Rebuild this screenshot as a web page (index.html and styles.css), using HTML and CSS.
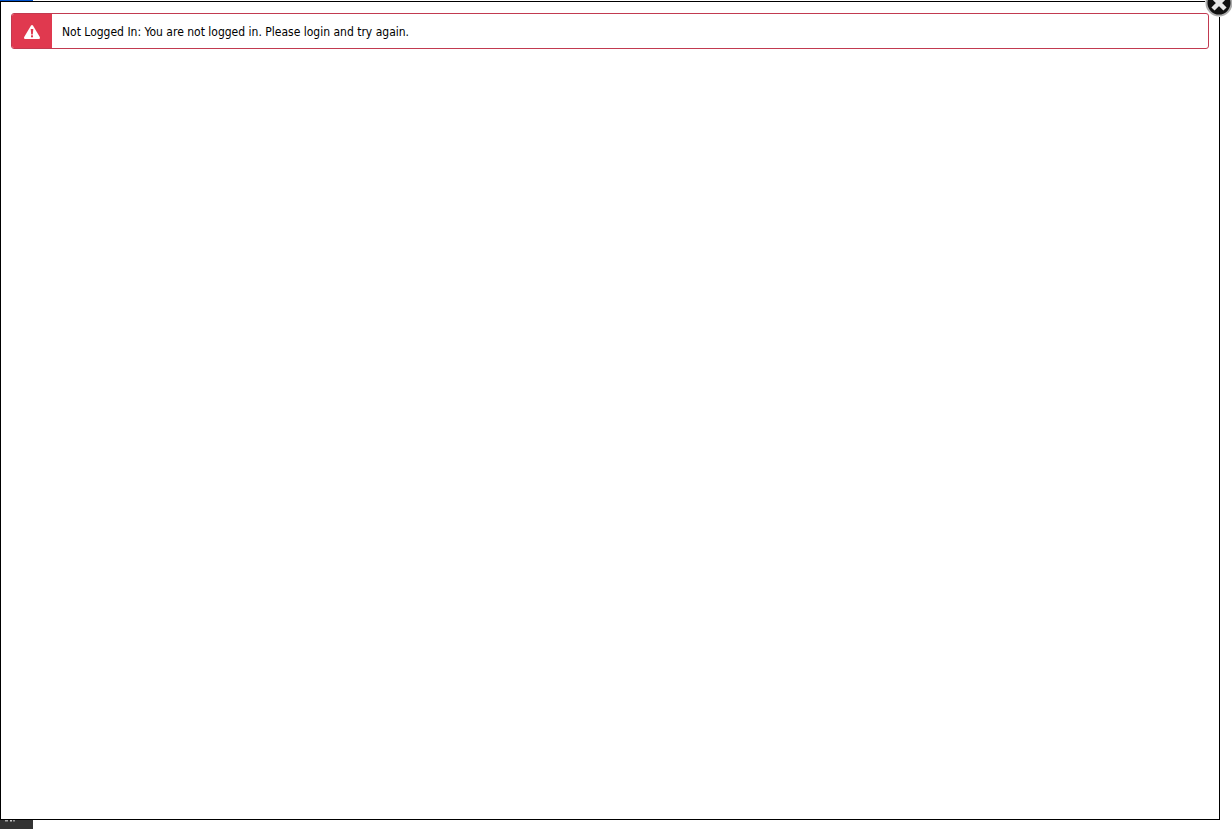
FILE: index.html
```html
<!DOCTYPE html>
<html lang="en">
<head>
  <title>Not Logged In</title>
  <meta charset="UTF-8">
  <link rel="stylesheet" href="styles.css">
</head>
<body>
  <div class="strip strip--top"></div>
  <div class="modal">
    <div class="alert">
      <div class="alert__icon">
        <svg width="16" height="14" viewBox="0 0 16 14">
          <path d="M8 0c.5 0 .8.3 1.100.7l6.700 11.400c.4.800-.1 1.900-1 1.900H1.200c-.9 0-1.400-1.100-1-1.900L6.900.7C7.200.3 7.500 0 8 0z" fill="#fff"/>
          <path d="M6.700 4h2.600l-.5 5.500H7.200z" fill="#e0394f"/>
          <rect x="7" y="10.300" width="2" height="2" fill="#e0394f"/>
        </svg>
      </div>
      <div class="alert__text">Not Logged In: You are not logged in. Please login and try again.</div>
    </div>
    <a class="close" href="#">
      <svg width="28" height="28" viewBox="0 0 28 28">
        <circle cx="14" cy="14" r="14" fill="#fff"/>
        <circle cx="14" cy="14" r="12.500" fill="#111" stroke="#aaa" stroke-width="2"/>
        <path d="M8 8l12 12M20 8L8 20" stroke="#e8e8e8" stroke-width="4.500"/>
      </svg>
    </a>
  </div>
  <div class="strip strip--bottom">
    <svg class="strip__marks" width="33" height="2" viewBox="0 0 33 2">
      <rect x="5" y="0" width="3" height="1.500" fill="#aaa"/>
      <rect x="10" y="0" width="2" height="1.500" fill="#ccc"/>
      <rect x="13" y="0" width="2" height="1.500" fill="#999"/>
    </svg>
  </div>
</body>
</html>
```

FILE: styles.css
```css
html, body {
  margin: 0;
  padding: 0;
  height: 829px;
  overflow: hidden;
  background: #fff;
}

body {
  font-family: "DejaVu Sans Condensed", "DejaVu Sans", sans-serif;
}

.strip {
  width: 33px;
}

.strip--top {
  height: 1px;
  background: #0052cc;
}

.strip--bottom {
  height: 9px;
  background: #333;
}

.strip__marks {
  display: block;
}

.modal {
  position: relative;
  box-sizing: border-box;
  width: 1220px;
  height: 819px;
  padding: 11px 10px;
  border: 1px solid #000;
  background: #fff;
}

.alert {
  display: flex;
  align-items: center;
  height: 36px;
  box-sizing: border-box;
  border: 1px solid #c23a50;
  border-radius: 3px;
  overflow: hidden;
}

.alert__icon {
  display: flex;
  align-items: center;
  justify-content: center;
  width: 40px;
  height: 100%;
  padding-top: 1px;
  box-sizing: border-box;
  background: #e0394f;
}

.alert__text {
  padding: 2px 0 0 10px;
  font-size: 12px;
  color: #000;
}

.close {
  position: absolute;
  top: -13px;
  right: -14px;
  width: 28px;
  height: 28px;
}
```
